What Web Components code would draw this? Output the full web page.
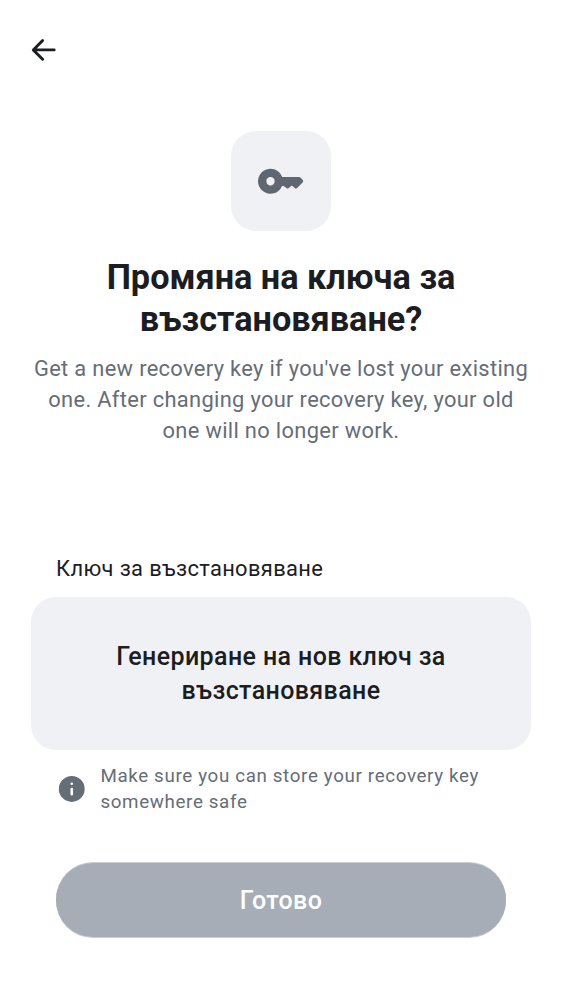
<!DOCTYPE html>
<html lang="bg"><head><meta charset="utf-8"><title>Recovery key</title>
<style>body{margin:0;background:#fff;font-family:Roboto,sans-serif;color:#1b1d22}</style></head>
<body><recovery-screen></recovery-screen>
<script>
const define=(name,html)=>customElements.define(name,class extends HTMLElement{constructor(){super();this.attachShadow({mode:'open'}).innerHTML=html}});
define('back-button',`<style>:host{display:block;height:100px;padding:0 28px;box-sizing:border-box}button{all:unset;display:flex;height:100px;align-items:center}svg{display:block}</style>
<button aria-label="Back"><svg width="32" height="30" viewBox="0 0 32 30" fill="none" stroke="#1b1d22" stroke-width="2.900" stroke-linecap="round" stroke-linejoin="round"><path d="M26.200 14.900H5.700M14.600 5.500 5.300 14.900l9.300 9.400"/></svg></button>`);
define('key-tile',`<style>:host{display:flex;width:100px;height:100px;border-radius:25px;background:#f0f1f5;align-items:center;justify-content:center}</style>
<svg width="52" height="32" viewBox="0 0 52 32"><path fill="#606770" fill-rule="evenodd" d="M27.240 12H44q.8 0 1.400.6l2.200 2.200q1.200 1.300 0 2.600l-5.200 5.400q-1.300 1.300-2.600.2L36.800 20.400l-3 2.700q-1.200 1-2.400 0L28.600 21H27.040A12.500 12.500 0 1 1 27.240 12M15.500 12a4.200 4.200 0 1 0 0 8.400 4.200 4.200 0 0 0 0-8.400"/></svg>`);
define('page-heading',`<style>:host{display:flex;flex-direction:column;align-items:center;text-align:center}h1{margin:25px 0 0;font:700 34.250px/42px Roboto,sans-serif}p{margin:13px 0 0;font-size:21.875px;line-height:31px;letter-spacing:.33px;color:#656d77;white-space:nowrap}</style>
<key-tile></key-tile><h1><slot name="title"></slot></h1><p><slot></slot></p>`);
define('generate-box',`<style>:host{display:flex;height:153px;border-radius:25px;background:#f0f1f5;align-items:center;justify-content:center;text-align:center;font-weight:500;font-size:25px;line-height:34px;letter-spacing:.38px}</style><div><slot></slot></div>`);
define('info-note',`<style>:host{display:flex;align-items:center;gap:13px;padding:13px 25px 0 25.400px;color:#656d77;font-size:18.750px;line-height:26px;letter-spacing:.65px}svg{flex:none}</style>
<svg width="31" height="31" viewBox="0 0 24 24"><path fill="#656d77" fill-rule="evenodd" transform="translate(.2 -.4)" d="M12 2a10 10 0 1 0 0 20 10 10 0 0 0 0-20m0 5a1 1 0 1 1 0 2 1 1 0 0 1 0-2m0 4q1 0 1 1v4q0 1-1 1t-1-1v-4q0-1 1-1"/></svg><div><slot></slot></div>`);
define('done-button',`<style>:host{display:block;padding:0 25px}button{all:unset;display:flex;width:100%;height:74px;border-radius:38px;background:#a6adb7;box-shadow:0 1px #a6adb799,0 -1px #a6adb799;color:#fff;align-items:center;justify-content:center;font-weight:500;font-size:25px;letter-spacing:.38px}</style><button><slot></slot></button>`);
define('recovery-screen',`<style>:host{display:block;height:1000px;overflow:hidden;background:#fff}main{padding:31px 31px 0}label{display:block;margin:108px 25px 13px;font-size:21.875px;line-height:30px;letter-spacing:.36px}info-note{margin-bottom:48px}</style>
<back-button></back-button><main><page-heading><span slot="title">Промяна на ключа за<br>възстановяване?</span>Get a new recovery key if you've lost your existing<br>one. After changing your recovery key, your old<br>one will no longer work.</page-heading>
<label>Ключ за възстановяване</label><generate-box>Генериране на нов ключ за<br>възстановяване</generate-box><info-note>Make sure you can store your recovery key<br>somewhere safe</info-note><done-button>Готово</done-button></main>`);
</script></body></html>
